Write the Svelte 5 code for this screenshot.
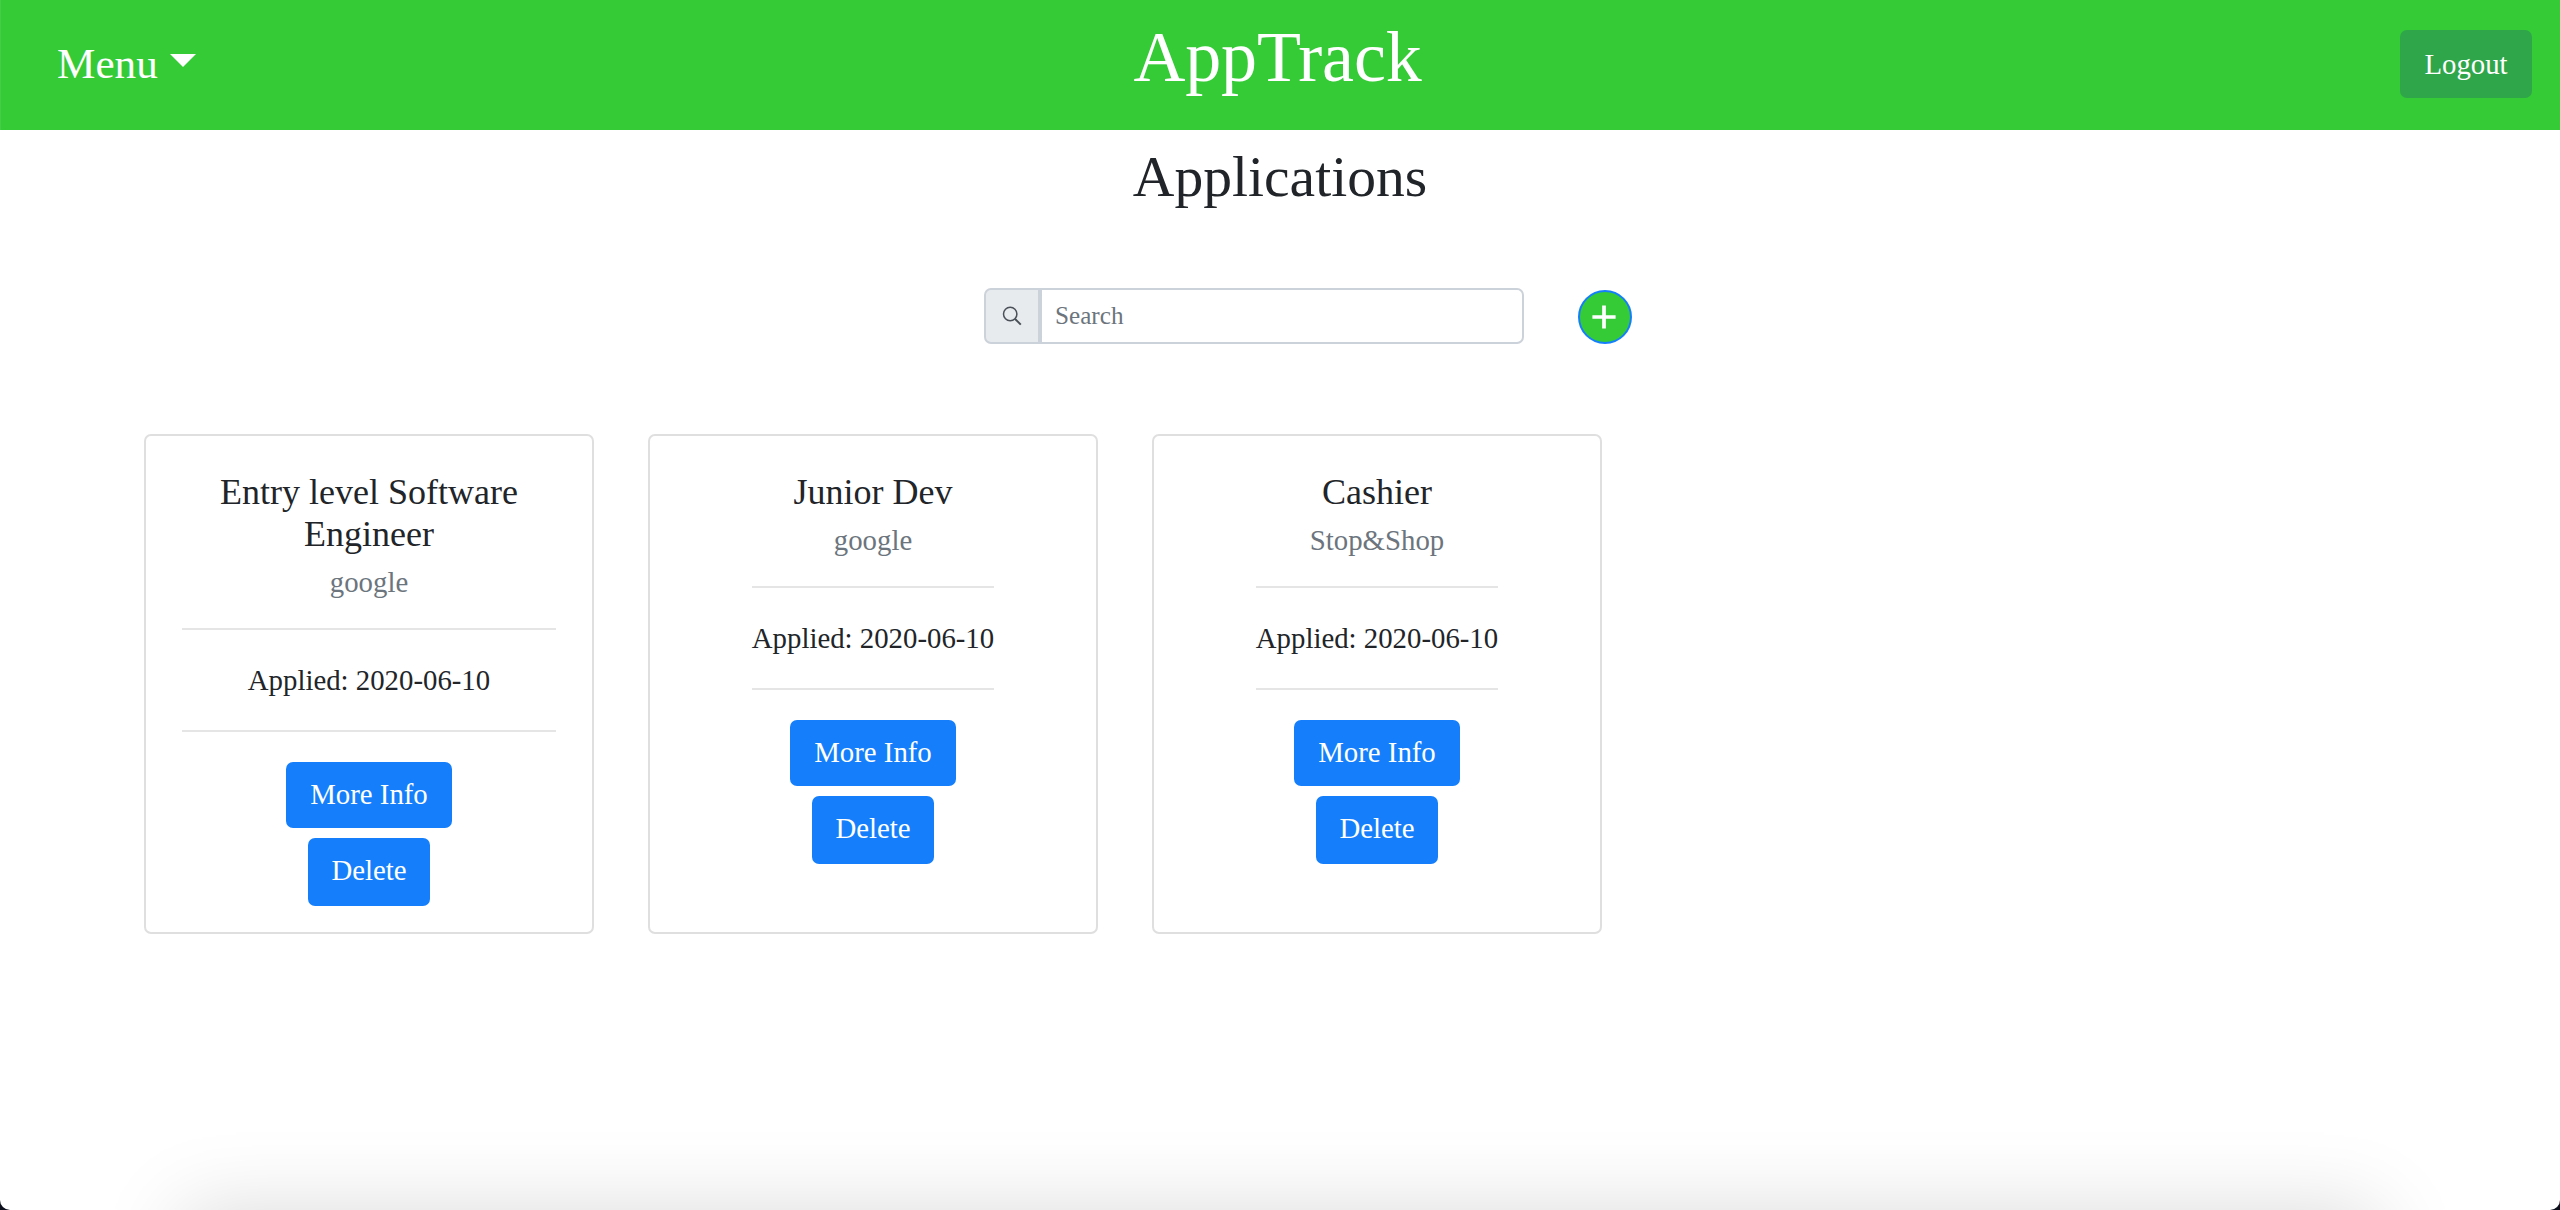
<script>
  const applications = [
    { title: 'Entry level Software Engineer', company: 'google', applied: '2020-06-10' },
    { title: 'Junior Dev', company: 'google', applied: '2020-06-10' },
    { title: 'Cashier', company: 'Stop&Shop', applied: '2020-06-10' }
  ];
</script>

<div class="window">
  <header class="navbar">
    <button class="menu">Menu<span class="caret"></span></button>
    <h1 class="brand">AppTrack</h1>
    <button class="logout">Logout</button>
  </header>

  <main>
    <h2 class="heading">Applications</h2>

    <div class="toolbar">
      <div class="search">
        <span class="addon">
          <svg width="20" height="20" viewBox="0 0 20 20" fill="none" stroke="#495057" stroke-width="1.5">
            <circle cx="8.2" cy="8" r="6.7" />
            <path d="M12.9 12.7L18.8 18.6" stroke-width="2" />
          </svg>
        </span>
        <input type="text" placeholder="Search" />
      </div>
      <button class="add" aria-label="Add application">
        <svg width="24" height="24" viewBox="0 0 24 24" stroke="#fff" stroke-width="3.7">
          <path d="M12 .4V23.6M.4 12H23.6" />
        </svg>
      </button>
    </div>

    <section class="cards">
      {#each applications as app}
        <article class="card">
          <div class="body">
            <h3>{app.title}</h3>
            <h4>{app.company}</h4>
            <hr />
            <p>Applied: {app.applied}</p>
            <hr />
            <div class="actions">
              <button class="btn info">More Info</button>
              <button class="btn delete">Delete</button>
            </div>
          </div>
        </article>
      {/each}
    </section>
  </main>
  <div class="shade"></div>
</div>

<style>
  :global(body) {
    margin: 0;
    background: #0b101c;
  }

  .window {
    position: relative;
    box-sizing: border-box;
    width: 2560px;
    height: 1210px;
    overflow: hidden;
    background: #fff;
    border-radius: 0 0 10px 10px;
    color: #212529;
    font-family: 'Liberation Serif', 'Times New Roman', serif;
    font-size: 28.8px;
  }

  h1, h2, h3, h4, p {
    margin: 0;
    font-weight: 400;
  }

  button {
    box-sizing: border-box;
    padding: 0;
    border: 0;
    color: #fff;
    font: inherit;
  }

  .navbar {
    box-sizing: border-box;
    display: grid;
    grid-template-columns: 1fr auto 1fr;
    height: 130px;
    padding: 0 28px 0 57px;
    background: #35cb37;
    box-shadow: inset 1px 0 #45cd47;
  }

  .menu {
    display: flex;
    justify-self: start;
    align-items: flex-start;
    padding-top: 40px;
    background: none;
    font-size: 43.2px;
    line-height: 48px;
  }

  .caret {
    margin: 14px 0 0 12px;
    border: 13px solid transparent;
    border-top-color: #fff;
    border-bottom: 0;
  }

  .brand {
    padding-top: 14px;
    margin-left: -34px;
    color: #fff;
    font-size: 72px;
    letter-spacing: -0.15px;
    line-height: 86px;
  }

  .logout {
    justify-self: end;
    width: 132px;
    height: 68px;
    margin-top: 30px;
    padding-top: 1px;
    border-radius: 7px;
    background: #30a64a;
  }

  .heading {
    padding-top: 12px;
    font-size: 57.6px;
    line-height: 69px;
    text-align: center;
  }

  .toolbar {
    display: flex;
    gap: 54px;
    margin: 77px 0 0 984px;
  }

  .search {
    display: flex;
    width: 540px;
    height: 56px;
  }

  .addon {
    box-sizing: border-box;
    display: flex;
    width: 56px;
    padding: 16px 0 0 16px;
    border: 2px solid #ccd2d9;
    border-radius: 7px 0 0 7px;
    background: #e8ebee;
  }

  input {
    box-sizing: border-box;
    flex: 1;
    min-width: 0;
    padding: 0 13px;
    border: 2px solid #ccd2d9;
    border-radius: 0 7px 7px 0;
    background: #fff;
    font: 25.2px 'Liberation Serif', 'Times New Roman', serif;
  }

  input::placeholder {
    color: #6c757d;
    opacity: 1;
  }

  .add {
    display: flex;
    align-items: center;
    justify-content: center;
    width: 54px;
    height: 54px;
    margin-top: 2px;
    padding-right: 2px;
    border: 2px solid #157ffb;
    border-radius: 50%;
    background: #35cb37;
  }

  .cards {
    display: grid;
    grid-template-columns: repeat(3, 450px);
    gap: 54px;
    margin: 90px 0 0 144px;
  }

  .card {
    box-sizing: border-box;
    display: flex;
    justify-content: center;
    height: 500px;
    padding: 35px 36px 0;
    border: 2px solid #dfdfdf;
    border-radius: 7px;
    text-align: center;
  }

  h3 {
    font-size: 36px;
    line-height: 42px;
  }

  h4 {
    margin-top: 10px;
    color: #6c757d;
    font-size: 28.8px;
    line-height: 34px;
  }

  hr {
    height: 2px;
    margin: 29px 0 28px;
    border: 0;
    background: #e5e5e5;
  }

  p {
    padding-top: 1px;
    margin-bottom: -1px;
    line-height: 43px;
  }

  .actions {
    display: flex;
    flex-direction: column;
    align-items: center;
    gap: 10px;
    margin-top: 30px;
  }

  .btn {
    border-radius: 7px;
    background: #157ffb;
  }

  .info {
    width: 166px;
    height: 66px;
    padding-bottom: 1px;
  }

  .delete {
    width: 122px;
    height: 68px;
    padding-bottom: 3px;
  }

  /* soft shadow rising from the bottom edge of the window */
  .shade {
    position: absolute;
    top: 1211px;
    left: 182px;
    width: 2196px;
    height: 300px;
    box-shadow: 0 0 78px rgba(0, 0, 0, 0.15);
  }
</style>
